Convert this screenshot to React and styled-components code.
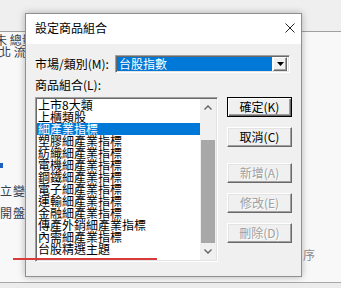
import React from "react";
import styled, { createGlobalStyle } from "styled-components";

const Global = createGlobalStyle`
  html, body { margin: 0; padding: 0; background: #f7f7f7; }
  body { font-family: "Noto Sans CJK TC", "Noto Sans CJK SC", sans-serif; }
  * { box-sizing: border-box; }
`;

const FONT = `"Noto Sans CJK TC", "Noto Sans CJK SC", sans-serif`;

const Screen = styled.div`
  position: relative;
  width: 341px;
  height: 288px;
  overflow: hidden;
  background: #f8f8f8;
  display: flex;
  flex-direction: column;
  font-family: ${FONT};
`;

const AppTopBar = styled.div`
  height: 32px;
  flex: none;
  background: #efefef;
  border-bottom: 1px solid #a0a0a0;
`;

const AppContent = styled.div`
  flex: 1;
  display: flex;
`;

const LeftStrip = styled.div`
  display: flex;
  flex-direction: column;
  width: 30px;
`;

const BgText = styled.div`
  font-size: 12px;
  line-height: 12px;
  height: 12px;
  white-space: nowrap;
  color: #35404f;
  letter-spacing: ${(p) => p.$spacing || 0}px;
  margin-top: ${(p) => p.$top || 0}px;
  margin-left: ${(p) => p.$left || 0}px;
`;

const BlueMark = styled.div`
  width: 3px;
  height: 5px;
  background: #1f5fbf;
  margin-top: 105px;
`;

const RightStrip = styled.div`
  margin-left: auto;
  width: 38px;
  padding-top: 217px;
`;

const FadedText = styled.div`
  font-size: 12px;
  line-height: 12px;
  color: #8d8d8d;
`;

const AppFooter = styled.div`
  height: 6px;
  flex: none;
  background: #ececec;
  border-top: 1px solid #a8a8a8;
`;

/* ---------- dialog ---------- */

const Dialog = styled.div`
  position: absolute;
  left: 25px;
  top: 13px;
  width: 277px;
  height: 264px;
  border: 1px solid #8f8f8f;
  background: #f0f0f0;
  box-shadow: 0 0 7px rgba(0, 0, 0, 0.28);
  display: flex;
  flex-direction: column;
  color: #000;
  font-size: 12px;
`;

const TitleBar = styled.div`
  height: 30px;
  flex: none;
  background: #fff;
  display: flex;
  align-items: center;
  padding-left: 9px;
`;

const Title = styled.span`
  font-size: 12px;
  line-height: 12px;
  margin-top: -2px;
`;

const CloseButton = styled.div`
  margin-left: auto;
  width: 23px;
  height: 30px;
  display: flex;
  align-items: center;
  justify-content: center;
  margin-top: -2px;
`;

const Body = styled.div`
  flex: 1;
  display: flex;
  flex-direction: column;
  padding: 11px 9px 14px 9px;
`;

const FieldRow = styled.div`
  display: flex;
  align-items: center;
  height: 18px;
`;

const Label = styled.div`
  font-size: 12px;
  line-height: 12px;
  white-space: nowrap;
  margin-top: ${(p) => p.$top || 0}px;
`;

const Combo = styled.div`
  margin-left: auto;
  margin-right: 2px;
  width: 175px;
  height: 18px;
  border: 1px solid;
  border-color: #a0a0a0 #fff #fff #a0a0a0;
  box-shadow: inset 1px 1px 0 #696969, inset -1px -1px 0 #e3e3e3;
  background: #fff;
  padding: 1px 2px 1px 1px;
  display: flex;
  gap: 1px;
`;

const ComboValue = styled.div`
  flex: 1;
  background: #0078d7;
  color: #fff;
  font-size: 12px;
  line-height: 14px;
  padding-left: 2px;
`;

const ComboArrow = styled.div`
  width: 14px;
  background: #f0f0f0;
  border: 1px solid;
  border-color: #fff #696969 #696969 #fff;
  box-shadow: inset -1px -1px 0 #a0a0a0;
  display: flex;
  align-items: center;
  justify-content: center;
`;

const Main = styled.div`
  display: flex;
  margin-top: 6px;
  flex: 1;
`;

const ListBox = styled.div`
  width: 183px;
  height: 165px;
  border: 1px solid;
  border-color: #a0a0a0 #fff #fff #a0a0a0;
  box-shadow: inset 1px 1px 0 #696969, inset -1px -1px 0 #e3e3e3;
  background: #fff;
  padding: 1px;
  display: flex;
`;

const Items = styled.div`
  flex: 1;
  display: flex;
  flex-direction: column;
  overflow: hidden;
`;

const Item = styled.div`
  height: 12px;
  font-size: 12px;
  line-height: 12px;
  white-space: nowrap;
  padding-left: 1px;
  background: ${(p) => (p.$selected ? "#0078d7" : "transparent")};
  color: ${(p) => (p.$selected ? "#fff" : "#000")};
`;

const ScrollBar = styled.div`
  width: 16px;
  background: #f0f0f0;
  display: flex;
  flex-direction: column;
`;

const ScrollArrow = styled.div`
  height: 17px;
  flex: none;
  display: flex;
  align-items: center;
  justify-content: center;
`;

const Track = styled.div`
  flex: 1;
  display: flex;
  flex-direction: column;
  padding-top: 24px;
`;

const Thumb = styled.div`
  flex: 1;
  margin: 0 1px;
  background: #a8a8a8;
`;

const ButtonCol = styled.div`
  margin-left: auto;
  width: 65px;
  display: flex;
  flex-direction: column;
`;

const ButtonGroup = styled.div`
  display: flex;
  flex-direction: column;
  gap: 10px;
  margin-top: ${(p) => p.$top || 0}px;
`;

const Button = styled.div`
  height: 20px;
  background: #f0f0f0;
  border: 1px solid;
  border-color: ${(p) => (p.$default ? "#000" : "#fff #696969 #696969 #fff")};
  box-shadow: ${(p) =>
    p.$default
      ? "inset 1px 1px 0 #fff, inset -1px -1px 0 #696969, inset -2px -2px 0 #a0a0a0"
      : "inset -1px -1px 0 #a0a0a0, inset 1px 1px 0 #e3e3e3"};
  display: flex;
  align-items: center;
  justify-content: center;
  font-size: 12px;
  line-height: 12px;
  color: ${(p) => (p.$disabled ? "#a0a0a0" : "#000")};
  text-shadow: ${(p) => (p.$disabled ? "1px 1px 0 #fff" : "none")};
`;

const RedMark = styled.div`
  position: absolute;
  left: 13px;
  top: 258px;
  width: 144px;
  height: 2px;
  background: #d93a3a;
`;

const items = [
  "上市8大類",
  "上櫃類股",
  "細產業指標",
  "塑膠細產業指標",
  "紡織細產業指標",
  "電機細產業指標",
  "鋼鐵細產業指標",
  "電子細產業指標",
  "運輸細產業指標",
  "金融細產業指標",
  "傳產外銷細產業指標",
  "內需細產業指標",
  "台股精選主題",
];

const Chevron = ({ down }) => (
  <svg width="8" height="5" viewBox="0 0 8 5">
    <polyline
      points={down ? "0.5,0.5 4,4 7.5,0.5" : "0.5,4.5 4,1 7.5,4.5"}
      fill="none"
      stroke="#606060"
      strokeWidth="1.3"
    />
  </svg>
);

export default function App() {
  return (
    <>
      <Global />
      <Screen>
        <AppTopBar />
        <AppContent>
          <LeftStrip>
            <BgText $top={2} $left={-5}>未 總量</BgText>
            <BgText $left={-1}>北 流</BgText>
            <BlueMark />
            <BgText $top={17} $spacing={1}>立變化</BgText>
            <BgText $top={10} $spacing={1}>開盤價</BgText>
          </LeftStrip>
          <RightStrip>
            <FadedText>序</FadedText>
          </RightStrip>
        </AppContent>
        <AppFooter />

        <Dialog>
          <TitleBar>
            <Title>設定商品組合</Title>
            <CloseButton>
              <svg width="10" height="10" viewBox="0 0 10 10">
                <path d="M0.5 0.5 L9.5 9.5 M9.5 0.5 L0.5 9.5" stroke="#222" strokeWidth="1" fill="none" />
              </svg>
            </CloseButton>
          </TitleBar>
          <Body>
            <FieldRow>
              <Label>市場/類別(M):</Label>
              <Combo>
                <ComboValue>台股指數</ComboValue>
                <ComboArrow>
                  <svg width="7" height="4" viewBox="0 0 7 4">
                    <polygon points="0,0 7,0 3.5,4" fill="#000" />
                  </svg>
                </ComboArrow>
              </Combo>
            </FieldRow>
            <Label $top={6}>商品組合(L):</Label>
            <Main>
              <ListBox>
                <Items>
                  {items.map((t, i) => (
                    <Item key={t} $selected={i === 2}>{t}</Item>
                  ))}
                </Items>
                <ScrollBar>
                  <ScrollArrow><Chevron /></ScrollArrow>
                  <Track><Thumb /></Track>
                  <ScrollArrow><Chevron down /></ScrollArrow>
                </ScrollBar>
              </ListBox>
              <ButtonCol>
                <ButtonGroup>
                  <Button $default>確定(K)</Button>
                  <Button>取消(C)</Button>
                </ButtonGroup>
                <ButtonGroup $top={16}>
                  <Button $disabled>新增(A)</Button>
                  <Button $disabled>修改(E)</Button>
                  <Button $disabled>刪除(D)</Button>
                </ButtonGroup>
              </ButtonCol>
            </Main>
          </Body>
        </Dialog>
        <RedMark />
      </Screen>
    </>
  );
}
